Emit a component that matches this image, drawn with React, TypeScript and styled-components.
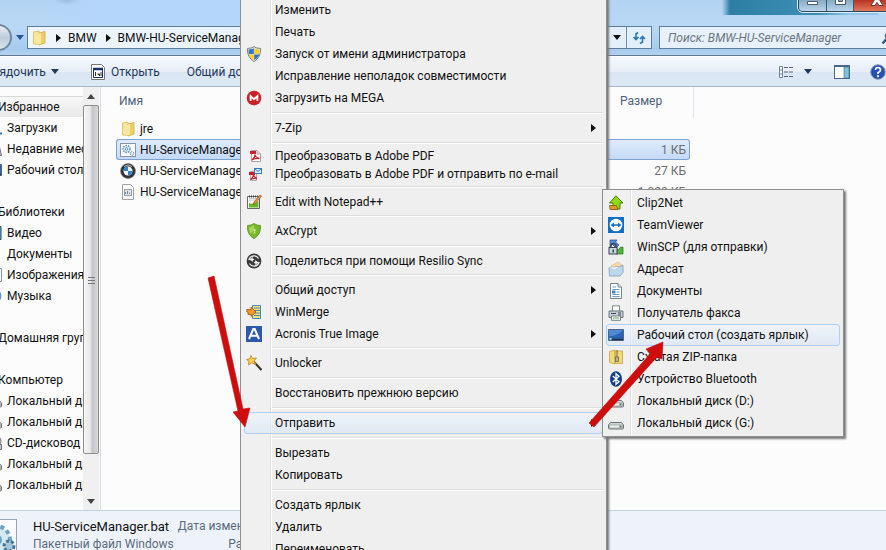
import React from "react";
import styled, { createGlobalStyle } from "styled-components";

const GlobalStyle = createGlobalStyle`
  * { box-sizing: border-box; }
  html, body { margin: 0; height: 100%; overflow: hidden; }
  #root { height: 100%; }
  body, button, input, table {
    font-family: Roboto, "Noto Sans", sans-serif;
    font-size: 12px;
    color: #111;
  }
  button { border: 0; background: none; padding: 0; text-align: left; white-space: nowrap; }
  a { color: inherit; text-decoration: none; }
  svg { display: block; flex: none; }
`;

/* ---------- window frame ---------- */

const Desktop = styled.div`
  position: relative;
  height: 100vh;
  overflow: hidden;
  background: #fcfcfc;
`;

const Window = styled.main`
  display: flex;
  flex-direction: column;
  height: 100%;
  margin: 0 -14px 0 -32px;
`;

const Glass = styled.header`
  display: flex;
  flex-direction: column;
  height: 56px;
  flex: none;
  border-bottom: 1px solid #60788f;
  background:
    linear-gradient(90deg, transparent 0, transparent 80px, #b4d6fb 130px, #b4d6fb 270px, transparent 310px) 0 0 / 100% 24px no-repeat,
    radial-gradient(ellipse 14px 5px at 100px 0, #88a9c9, transparent),
    linear-gradient(90deg, transparent 34px, #2d7fa3 42px, #3d8fb6 130px, #8fc4e6 160px) 720px -9px / 190px 24px no-repeat,
    linear-gradient(#b3d3f2, #b9d8f6 50%, #a6cbee 90%, #b5d2ee);
`;

const Caption = styled.div`
  display: flex;
  justify-content: flex-end;
  height: 26px;
  flex: none;
`;

const CaptionGroup = styled.div`
  display: flex;
  height: 12px;
  border: 1px solid #33485d;
  border-top: 0;
  border-radius: 0 0 5px 5px;
  box-shadow: 0 0 0 1px #d9ebfb;
  overflow: hidden;
`;

const CaptionButton = styled.button<{ $close?: boolean }>`
  display: flex;
  justify-content: center;
  width: ${(p) => (p.$close ? 46 : 27)}px;
  border-left: 1px solid #3d5972;
  background: ${(p) => (p.$close ? "linear-gradient(#b93420, #e2765a)" : "linear-gradient(#86a9c4, #b9d6ea)")};
  &:first-child { border-left: 0; }
`;

const AddressRow = styled.div`
  display: flex;
  align-items: center;
  height: 23px;
`;

const Back = styled.button`
  width: 27px;
  height: 27px;
  margin-left: 17px;
  flex: none;
  border: 2px solid #71889f;
  border-radius: 50%;
  background: linear-gradient(#e8eef4, #bccddd 50%, #d9e6f0);
`;

const HistoryButton = styled.button`
  display: flex;
  justify-content: center;
  width: 15px;
  flex: none;
`;

const AddressBar = styled.nav`
  display: flex;
  align-items: center;
  width: 625px;
  height: 23px;
  flex: none;
  border: 1px solid #5f7d9b;
  background: linear-gradient(90deg, #eef5fc, #e3effb);
  padding-left: 3px;
`;

const Crumb = styled.button`
  display: flex;
  align-items: center;
  gap: 7px;
  padding-left: 9px;
`;

const BarSpacer = styled.div`
  flex: 1;
`;

const RefreshButton = styled.button`
  display: flex;
  align-items: center;
  justify-content: center;
  width: 25px;
  height: 21px;
  margin-left: 5px;
  border-left: 1px solid #6f8ca8;
`;

const Search = styled.label`
  display: flex;
  align-items: center;
  flex: 1;
  height: 23px;
  margin: 0 2px 0 7px;
  padding: 0 2px 0 8px;
  border: 1px solid #5f7d9b;
  background: #e6f1fb;
`;

const SearchInput = styled.input`
  flex: 1;
  min-width: 0;
  padding: 0;
  border: 0;
  background: none;
  outline: none;
  font-style: italic;
  &::placeholder { color: #6c7682; opacity: 1; }
`;

/* ---------- command bar ---------- */

const CommandBar = styled.div`
  display: flex;
  align-items: center;
  height: 31px;
  flex: none;
  padding: 0 14px 0 4px;
  border-top: 1px solid #fff;
  border-bottom: 1px solid #a8b6c9;
  background: linear-gradient(#f6f9fd, #e6eef8 50%, #dae6f3 50%, #dde8f5);
`;

const Command = styled.button<{ $gap?: number }>`
  display: flex;
  align-items: center;
  gap: 5px;
  margin-left: ${(p) => p.$gap ?? 0}px;
  color: #1e395b;
`;

/* ---------- body ---------- */

const Body = styled.div`
  display: flex;
  flex: 1;
  min-height: 0;
`;

const Sidebar = styled.nav`
  width: 115px;
  flex: none;
  overflow: hidden;
  padding-top: 9px;
`;

const Group = styled.div`
  margin-bottom: 21px;
`;

const GroupHead = styled.a<{ $active?: boolean }>`
  display: flex;
  align-items: center;
  height: 21px;
  padding-left: 30px;
  white-space: nowrap;
  border-top: 1px solid ${(p) => (p.$active ? "#d9d9d9" : "transparent")};
  background: ${(p) => (p.$active ? "linear-gradient(#f8f8f8, #e8e8e8)" : "none")};
`;

const SideLink = styled.a`
  display: flex;
  align-items: center;
  gap: 5px;
  height: 21px;
  padding-left: 18px;
  white-space: nowrap;
`;

const ScrollTrack = styled.div`
  display: flex;
  flex-direction: column;
  width: 16px;
  flex: none;
  background: #f0f0f0;
`;

const ScrollArrow = styled.button`
  display: flex;
  align-items: center;
  justify-content: center;
  height: 18px;
  flex: none;
`;

const Thumb = styled.div`
  display: flex;
  align-items: center;
  justify-content: center;
  flex: 349;
  border: 1px solid #8e8e8e;
  border-radius: 2px;
  background: linear-gradient(90deg, #f6f6f6, #e6e6e8 45%, #c4c4c8 60%, #d9d9dc);
`;

const TrackRest = styled.div`
  flex: 38;
`;

const Files = styled.section`
  flex: 1;
  min-width: 0;
  margin-left: 1px;
  padding-left: 15px;
  border-left: 1px solid #cfdcec;
`;

const FileTable = styled.table`
  width: 578px;
  table-layout: fixed;
  border-collapse: separate;
  border-spacing: 0;
`;

const HeadCell = styled.th<{ $w?: number }>`
  width: ${(p) => (p.$w ? `${p.$w}px` : "auto")};
  height: 31px;
  padding: 0 3px 4px;
  text-align: left;
  font-weight: 400;
  color: #4c607a;
`;

const HeadEdge = styled.td`
  width: 4px;
  padding: 0;
  border-right: 1px solid #e4e8ee;
`;

const FileRow = styled.tr<{ $selected?: boolean }>`
  td {
    height: 21px;
    padding: 0 3px;
    border: 1px solid transparent;
    border-width: 1px 0;
    ${(p) => p.$selected && "border-color: #7da2ce; background: linear-gradient(#dfebfb, #c4dafa);"}
  }
  td:first-child { border-left-width: 1px; border-radius: 3px 0 0 3px; padding-left: 3px; }
  td:last-child { border-right-width: 1px; border-radius: 0 3px 3px 0; text-align: right; color: #6d6d6d; }
`;

const FileName = styled.span`
  display: flex;
  align-items: center;
  gap: 4px;
  height: 19px;
  white-space: nowrap;
`;

const Details = styled.footer`
  display: flex;
  height: 40px;
  flex: none;
  border-top: 1px solid #c3d0e0;
  background: #eef3fb;
  overflow: hidden;
`;

const DetailIcon = styled.div`
  width: 49px;
  height: 49px;
  margin: 8px 0 0;
  flex: none;
  border: 1px solid #98a5b3;
  background: #fbfcfe;
`;

const DetailText = styled.div<{ $right?: boolean }>`
  display: grid;
  grid-template-rows: 18px 18px;
  align-items: center;
  justify-items: ${(p) => (p.$right ? "end" : "start")};
  height: 36px;
  margin: 6px 0 0 ${(p) => (p.$right ? 4 : 16)}px;
  color: #5a6b80;
  white-space: nowrap;
`;

const DetailTitle = styled.strong`
  font-weight: 400;
  font-size: 13px;
  color: #111;
`;

/* ---------- menus ---------- */

const ContextMenu = styled.div`
  position: absolute;
  left: 240px;
  top: -1px;
  width: 367px;
  padding: 0 3px;
  border: 1px solid #8f8f8f;
  border-width: 0 1px;
  background: linear-gradient(90deg, #f0f0f0 29px, #dfdfdf 29px, #dfdfdf 30px, #fff 30px, #fff 31px, #efefef 31px);
  box-shadow: 2px 0 2px #777;
`;

const SubMenu = styled.div`
  position: absolute;
  left: 602px;
  top: 189px;
  width: 242px;
  padding: 2px 3px;
  border: 1px solid #8f8f8f;
  background: linear-gradient(90deg, #f0f0f0 27px, #dfdfdf 27px, #dfdfdf 28px, #fff 28px, #fff 29px, #efefef 29px);
  box-shadow: 2px 2px 2px #777;
`;

const Item = styled.button<{ $h?: number; $active?: boolean }>`
  display: flex;
  align-items: center;
  width: 100%;
  height: ${(p) => p.$h ?? 22}px;
  padding-right: 6px;
  border: 1px solid ${(p) => (p.$active ? "#aecff7" : "transparent")};
  border-radius: 3px;
  ${(p) => p.$active && "background: linear-gradient(rgba(240,245,252,.7), rgba(218,230,247,.7));"}
`;

const ItemIcon = styled.span`
  display: flex;
  align-items: center;
  width: 30px;
  padding-left: 1px;
  flex: none;
`;

const ItemLabel = styled.span`
  flex: 1;
`;

const Separator = styled.hr`
  height: 2px;
  margin: 3px 0 3px 28px;
  border: 0;
  border-top: 1px solid #dedede;
  border-bottom: 1px solid #fff;
`;

const Pointers = styled.svg`
  position: absolute;
  left: 0;
  top: 0;
  pointer-events: none;
`;

/* ---------- icons ---------- */

type IconName =
  | "uac" | "mega" | "pdf" | "pdfMail" | "notepad" | "ax" | "sync" | "merge" | "acronis" | "wand"
  | "clip" | "team" | "scp" | "mail" | "doc" | "fax" | "desktop" | "zip" | "bt" | "disk"
  | "folder" | "bat" | "bmw" | "ini" | "download" | "recent" | "video" | "image" | "music" | "cd" | "program";

const drawings: Record<IconName, React.ReactNode> = {
  uac: (
    <>
      <path d="M8 0.5 10 1.8 14.6 2.5Q15.2 11 8 15.6 0.8 11 1.4 2.5L6 1.8Z" fill="#e4e6e4" stroke="#7b8288" />
      <path d="M7.8 2.2V8H2.6L2.6 3.4 6.4 3Z" fill="#3474c4" />
      <path d="M8.2 2.2 9.6 3 13.4 3.4V8H8.2Z" fill="#f2cf2e" />
      <path d="M2.7 8.4H7.8V14Q3.5 11.5 2.7 8.4Z" fill="#f2cf2e" />
      <path d="M8.2 8.4H13.3Q12.5 11.5 8.2 14Z" fill="#3474c4" />
    </>
  ),
  mega: (
    <>
      <circle cx="8" cy="8" r="7.3" fill="#cf1f26" />
      <path d="M4.6 11V6L8 9.2 11.4 6V11" fill="none" stroke="#fff" strokeWidth="1.8" />
    </>
  ),
  pdf: (
    <>
      <path d="M5.5 2.5H11L14.5 6V13.5H5.5Z" fill="#fff" stroke="#b0a0a0" />
      <path d="M11 2.5V6H14.5" fill="#ddd" stroke="#b0a0a0" />
      <rect x="4" y="3" width="6" height="3" fill="#c8202a" />
      <path d="M6 12Q9 10 9 6.5 9.5 9.5 13.5 10.5 9 9.8 6 12Z" fill="none" stroke="#c8202a" strokeWidth="1.3" />
    </>
  ),
  pdfMail: (
    <>
      <path d="M4.500 5.500H10.500V14.500H4.500Z" fill="#fff" stroke="#a9a9a9" />
      <rect x="3" y="6" width="6" height="3" fill="#c8202a" />
      <path d="M4.500 13.500Q7 12 7.500 9 8 11.500 11 12.500 7 12 4.500 13.500Z" fill="none" stroke="#c8202a" strokeWidth="1.3" />
      <rect x="8.500" y="2.500" width="7" height="5" fill="#dcecfb" stroke="#3a77bd" />
      <path d="M9 3 12 5.500 15 3" fill="none" stroke="#3a77bd" />
    </>
  ),
  notepad: (
    <>
      <path d="M1.500 2.500H13.500V14.500H1.500Z" fill="#fafafa" stroke="#666" />
      <path d="M3 2.500H12" stroke="#444" strokeWidth="2" strokeDasharray="1 1" />
      <path d="M3 6H10M3 4.500H11" stroke="#ccc" />
      <path d="M3 9Q7 11 12.500 7V13.500H3Z" fill="#69b52c" />
      <path d="M7 10.500 8 8 14 1 15.500 2 9.500 9.500Z" fill="#e8923a" stroke="#8d4b1e" strokeWidth=".6" />
    </>
  ),
  ax: (
    <>
      <path d="M8 .5Q11 2.500 14.500 2.500 15.500 11 8 15.800 .5 11 1.500 2.500 5 2.500 8 .5Z" fill="#78b72a" stroke="#4f8b17" strokeWidth=".7" />
      <path d="M8 2Q5 4 3 4 2.800 8 4.500 11Q9 8 8 2Z" fill="#a6d456" />
      <circle cx="8.500" cy="7" r="1.300" fill="#c5e58c" />
      <path d="M8 8H9L9.500 10.500H7.500Z" fill="#c5e58c" />
    </>
  ),
  sync: (
    <>
      <circle cx="8" cy="8" r="7.400" fill="#3a3a3a" />
      <path d="M12.500 5.500A5.200 5.200 0 0 0 3 6.500H8M3.500 10.500A5.200 5.200 0 0 0 13 9.500H8" fill="none" stroke="#eee" strokeWidth="1.200" />
      <path d="M7 4.800 4.500 6.500 7 8.300M9 7.700 11.500 9.500 9 11.200" fill="none" stroke="#eee" strokeWidth="1.200" />
    </>
  ),
  merge: (
    <>
      <path d="M6.500 1.500H14.500V14.500H6.500Z" fill="#f7e27a" stroke="#4a89b8" />
      <path d="M8 4H14M8 6.500H14M8 9H14M8 11.500H14" stroke="#3d8fc4" />
      <path d="M.8 5.500H5V3L10 8 5 12.500V10.500H2V8H.8Z" fill="#ef9a2a" stroke="#a85510" strokeWidth=".8" />
    </>
  ),
  acronis: (
    <>
      <rect width="16" height="16" fill="#2c5aa8" />
      <path d="M3 13 7.300 3H8.700L13 13M4.800 9.700H11.200" fill="none" stroke="#fff" strokeWidth="2" />
    </>
  ),
  wand: (
    <>
      <path d="M7 6 15.500 15" stroke="#3c3226" strokeWidth="2" />
      <path d="M7 6 10 9" stroke="#98815f" strokeWidth="2" />
      <path d="M5 .5 6.500 3.500 10.500 3 8 6 9.500 9.500 5.800 7.800 2.500 10 3 6.500 .5 4.500 4 3.800Z" fill="#fbd24c" stroke="#c07820" strokeWidth=".8" />
    </>
  ),
  clip: (
    <>
      <path d="M8 .8 15 8H12V14H5V8H1.500Z" fill="#8ddb10" stroke="#477d0c" />
      <path d="M1.500 10.500H8.500L10 14.500H2Z" fill="#d99a28" stroke="#88540e" strokeWidth=".8" />
    </>
  ),
  team: (
    <>
      <rect width="16" height="16" fill="#1170c4" />
      <circle cx="8" cy="8" r="6.300" fill="#fff" />
      <path d="M2.500 8 6 5.500V7.200H10V5.500L13.500 8 10 10.500V8.800H6V10.500Z" fill="#1170c4" />
    </>
  ),
  scp: (
    <>
      <path d="M2 1H9L7.500 3 11 6 8 9 4.500 5.500 2 8Z" fill="#4b8de0" stroke="#23508f" strokeWidth=".7" />
      <path d="M15 15H8V9L10.500 11 12 8.500 15 8Z" fill="#4cb53a" stroke="#23701d" strokeWidth=".7" />
      <path d="M3 9V7A2.500 2.500 0 0 1 8 7V9" fill="none" stroke="#3b4651" strokeWidth="1.400" />
      <rect x="1" y="8.500" width="8" height="6.500" fill="#c9d4dc" stroke="#38444f" />
      <rect x="4.500" y="10.500" width="1.500" height="3" fill="#38444f" />
    </>
  ),
  mail: (
    <>
      <path d="M3 5 10 1 14 4V8H3Z" fill="#f9d9a3" stroke="#d8b98a" strokeWidth=".6" />
      <path d="M1 6.500 12 5.500 15 4V11.500L12 15H1.500Z" fill="#bdd7ee" stroke="#7f9ebb" strokeWidth=".8" />
      <path d="M1 6.500 6 9 12 5.700" fill="#e9f3fb" stroke="#b4cadd" strokeWidth=".7" />
    </>
  ),
  doc: (
    <>
      <path d="M2.500 .5H10L13.500 4V15.500H2.500Z" fill="#fdfdfd" stroke="#76858f" />
      <path d="M10 .5V4H13.500" fill="#dfe7ed" stroke="#76858f" />
      <path d="M4.500 4H8M4.500 6.500H11.500M8.500 9H11.500M4.500 11.500H11.500M4.500 13.500H11.500" stroke="#6f9fc8" />
      <rect x="4" y="7.500" width="3.500" height="3" fill="#4b88c0" />
    </>
  ),
  fax: (
    <>
      <path d="M4.500 6V.8H11.500V6" fill="#fff" stroke="#7d8890" />
      <path d="M1 6H15V12.500H1Z" fill="#c7ced4" stroke="#69747d" />
      <path d="M3 8.500H8M10 8H13M10 10H13" stroke="#3d4a55" />
      <path d="M3.500 11H12.500V15.300H3.500Z" fill="#fafafa" stroke="#76818a" />
      <path d="M5 13H11" stroke="#62b04c" />
    </>
  ),
  desktop: (
    <>
      <path d="M.5 2.500H15.500V13.500H.5Z" fill="#2a62b5" stroke="#4f6784" />
      <path d="M1 3H15Q10 9 1 9Z" fill="#4d8ad6" />
      <path d="M1 12.500H15" stroke="#20324b" strokeWidth="1.500" />
      <circle cx="2.500" cy="12" r="1.300" fill="#8dd0f0" />
    </>
  ),
  zip: (
    <>
      <path d="M1.500 2.500 7 1V15L1.500 13.500ZM7 2H14.500V14.500H7Z" fill="#f3da78" stroke="#c6a33e" strokeWidth=".8" />
      <path d="M9 1.500V8" stroke="#6e6655" strokeWidth="2" strokeDasharray="1 1" />
      <rect x="7.500" y="8" width="3" height="4.500" fill="#b9b4a4" stroke="#6e6655" strokeWidth=".8" />
    </>
  ),
  bt: (
    <>
      <ellipse cx="8" cy="8" rx="6" ry="7.800" fill="#0f3f8c" />
      <path d="M4.800 5 11 10.700 8 13.300V2.700L11 5.300 4.800 11" fill="none" stroke="#fff" strokeWidth="1.300" />
    </>
  ),
  disk: (
    <>
      <path d="M2.500 7.500H13.500L15.500 10V13Q15.500 14 14.500 14H1.500Q.5 14 .5 13V10Z" fill="#d4d6d5" stroke="#70757a" />
      <rect x="1.500" y="10" width="13" height="3" rx="1" fill="#eceeed" stroke="#8a8f92" strokeWidth=".6" />
      <rect x="11.500" y="10.500" width="2" height="2" fill="#4d7c54" />
    </>
  ),
  folder: (
    <>
      <path d="M2.500 2 8 1V14.500L2.500 14Z" fill="#f7e79b" stroke="#d8bb55" strokeWidth=".8" />
      <path d="M8 3 14 1.500V13L8 15Z" fill="#ecd06b" stroke="#cfac42" strokeWidth=".8" />
      <path d="M6 4 10 3V14L6 14.500Z" fill="#f8e89d" />
    </>
  ),
  bat: (
    <>
      <rect x=".5" y="1.500" width="15" height="13" fill="#fdfdfd" stroke="#8496a8" />
      <circle cx="6.500" cy="7" r="3.500" fill="#e4f0f7" stroke="#5d94b4" strokeWidth="1.500" strokeDasharray="1.500 1" />
      <circle cx="6.500" cy="7" r="1.300" fill="#fff" stroke="#5d94b4" />
      <circle cx="12" cy="11.500" r="1.800" fill="#e4f0f7" stroke="#47789b" strokeDasharray="1 .7" />
    </>
  ),
  bmw: (
    <>
      <circle cx="8" cy="8" r="7.500" fill="#303236" stroke="#888" strokeWidth=".8" />
      <circle cx="8" cy="8" r="4.500" fill="#f4f4f4" />
      <path d="M8 8V3.500A4.500 4.500 0 0 0 3.500 8ZM8 8V12.500A4.500 4.500 0 0 0 12.500 8Z" fill="#2f86cf" />
      <path d="M4 3.500Q8 .5 12 3.500" fill="none" stroke="#bbb" />
    </>
  ),
  ini: (
    <>
      <path d="M2.500 .5H10.500L13.500 3.500V15.500H2.500Z" fill="#fbfbfb" stroke="#a2a2a2" />
      <rect x="4.500" y="5.500" width="7" height="6" fill="#e3e7ea" stroke="#98a2aa" />
      <path d="M5.500 10V8M7.500 10V7M9.500 10V8.500" stroke="#6e879a" />
    </>
  ),
  download: <path d="M2 13.500H16M8 1V10M4 7 8 11 12 7" fill="none" stroke="#3579b5" strokeWidth="2" />,
  recent: <path d="M2.500 1.500H12.500L15.500 14.500H2.500Z" fill="#bda9b5" stroke="#84768c" />,
  video: <path d="M1.500 1.500H15V14.500H1.500Z" fill="#4fa0ab" stroke="#285866" />,
  image: <path d="M1.500 1.500H15.500V14.500H1.500Z" fill="#f6fafc" stroke="#8997a5" />,
  music: <circle cx="8" cy="8" r="7" fill="#8db9e5" stroke="#628cb8" />,
  cd: (
    <>
      <circle cx="10" cy="6" r="5" fill="#ddd" stroke="#777" />
      <rect x="1" y="9.500" width="14.500" height="5" fill="#c6c6c6" stroke="#777" />
    </>
  ),
  program: (
    <>
      <path d="M1.500 .5H11.500L14.500 3.500V15.500H1.500Z" fill="#fff" stroke="#777" />
      <path d="M3.500 4.500H12.500V13.500H3.500Z" fill="#fff" stroke="#1b2f6b" />
      <path d="M3 5H13" stroke="#1b2f6b" strokeWidth="2.500" />
      <path d="M5.500 8V12M7.500 10H9.500V12M11 8V12" stroke="#333" />
    </>
  ),
};

const Icon = ({ name }: { name: IconName }) => (
  <svg width="16" height="16" viewBox="0 0 16 16" aria-hidden="true">{drawings[name]}</svg>
);

const Triangle = ({ dir, color = "#111" }: { dir: "right" | "down" | "up"; color?: string }) => (
  <svg width={dir === "right" ? 5 : 8} height={dir === "right" ? 8 : 5} viewBox={dir === "right" ? "0 0 5 8" : "0 0 8 5"} aria-hidden="true">
    <path d={dir === "right" ? "M0 0 5 4 0 8Z" : dir === "down" ? "M0 0H8L4 5Z" : "M0 5H8L4 0Z"} fill={color} />
  </svg>
);

/* ---------- data ---------- */

type Entry = { label: string; icon?: IconName; h?: number; arrow?: boolean; active?: boolean };

const menuGroups: Entry[][] = [
  [
    { label: "Изменить" },
    { label: "Печать" },
    { label: "Запуск от имени администратора", icon: "uac" },
    { label: "Исправление неполадок совместимости" },
    { label: "Загрузить на MEGA", icon: "mega" },
  ],
  [{ label: "7-Zip", arrow: true }],
  [
    { label: "Преобразовать в Adobe PDF", icon: "pdf", h: 18 },
    { label: "Преобразовать в Adobe PDF и отправить по e-mail", icon: "pdfMail", h: 18 },
  ],
  [{ label: "Edit with Notepad++", icon: "notepad", h: 21 }],
  [{ label: "AxCrypt", icon: "ax", arrow: true }],
  [{ label: "Поделиться при помощи Resilio Sync", icon: "sync", h: 21 }],
  [
    { label: "Общий доступ", arrow: true },
    { label: "WinMerge", icon: "merge" },
    { label: "Acronis True Image", icon: "acronis", arrow: true, h: 21 },
  ],
  [{ label: "Unlocker", icon: "wand" }],
  [{ label: "Восстановить прежнюю версию" }],
  [{ label: "Отправить", arrow: true, active: true }],
  [{ label: "Вырезать" }, { label: "Копировать" }],
  [{ label: "Создать ярлык" }, { label: "Удалить" }, { label: "Переименовать" }],
];

const sendTo: Entry[] = [
  { label: "Clip2Net", icon: "clip" },
  { label: "TeamViewer", icon: "team" },
  { label: "WinSCP (для отправки)", icon: "scp" },
  { label: "Адресат", icon: "mail" },
  { label: "Документы", icon: "doc" },
  { label: "Получатель факса", icon: "fax" },
  { label: "Рабочий стол (создать ярлык)", icon: "desktop", active: true },
  { label: "Сжатая ZIP-папка", icon: "zip" },
  { label: "Устройство Bluetooth", icon: "bt" },
  { label: "Локальный диск (D:)", icon: "disk" },
  { label: "Локальный диск (G:)", icon: "disk" },
];

const places: { head: string; links: [string, IconName][] }[] = [
  { head: "Избранное", links: [["Загрузки", "download"], ["Недавние места", "recent"], ["Рабочий стол", "desktop"]] },
  { head: "Библиотеки", links: [["Видео", "video"], ["Документы", "doc"], ["Изображения", "image"], ["Музыка", "music"]] },
  { head: "Домашняя группа", links: [] },
  {
    head: "Компьютер",
    links: [["Локальный диск", "disk"], ["Локальный диск", "disk"], ["CD-дисковод", "cd"], ["Локальный диск", "disk"], ["Локальный диск", "disk"]],
  },
];

const files: { name: string; icon: IconName; size: string; selected?: boolean }[] = [
  { name: "jre", icon: "folder", size: "" },
  { name: "HU-ServiceManager.bat", icon: "bat", size: "1 КБ", selected: true },
  { name: "HU-ServiceManager.exe", icon: "bmw", size: "27 КБ" },
  { name: "HU-ServiceManager.jar", icon: "ini", size: "1 020 КБ" },
];

const MenuItem = ({ entry }: { entry: Entry }) => (
  <Item role="menuitem" $h={entry.h} $active={entry.active}>
    <ItemIcon>{entry.icon && <Icon name={entry.icon} />}</ItemIcon>
    <ItemLabel>{entry.label}</ItemLabel>
    {entry.arrow && <Triangle dir="right" />}
  </Item>
);

export default function App() {
  return (
    <Desktop>
      <GlobalStyle />
      <Window>
        <Glass>
          <Caption>
            <CaptionGroup>
              <CaptionButton aria-label="Свернуть">
                <svg width="13" height="6" viewBox="0 0 13 6"><path d="M1.500 1.500H11.500V4.500H1.500Z" fill="#fff" stroke="#4b5a68" /></svg>
              </CaptionButton>
              <CaptionButton aria-label="Развернуть">
                <svg width="13" height="6" viewBox="0 0 13 6"><path d="M1.500 -4V4.500H11.500V-4H8.500V1.500H4.500V-4Z" fill="#fff" stroke="#4b5a68" /></svg>
              </CaptionButton>
              <CaptionButton $close aria-label="Закрыть">
                <svg width="14" height="7" viewBox="0 0 14 7"><path d="M1 5.500 5 -1H9L13 5.500H9L7 2.500 5 5.500Z" fill="#fff" stroke="#5b3a38" /></svg>
              </CaptionButton>
            </CaptionGroup>
          </Caption>
          <AddressRow>
            <Back aria-label="Назад" />
            <HistoryButton aria-label="Последние страницы"><Triangle dir="down" color="#24598f" /></HistoryButton>
            <AddressBar aria-label="Адрес">
              <Icon name="folder" />
              <Crumb><Triangle dir="right" />BMW</Crumb>
              <Crumb><Triangle dir="right" />BMW-HU-ServiceManager</Crumb>
              <BarSpacer />
              <Triangle dir="down" />
              <RefreshButton aria-label="Обновить">
                <svg width="14" height="14" viewBox="0 0 14 14">
                  <path d="M6 1.500 4 3V8M1.500 6 4 8.500 6.500 6" fill="none" stroke="#2a75b8" strokeWidth="1.600" />
                  <path d="M8 12.500 10.500 11V6M8 8 10.500 5.500 13 8" fill="none" stroke="#2a75b8" strokeWidth="1.600" />
                </svg>
              </RefreshButton>
            </AddressBar>
            <Search>
              <SearchInput aria-label="Поиск" placeholder="Поиск: BMW-HU-ServiceManager" />
              <svg width="14" height="14" viewBox="0 0 14 14">
                <circle cx="8.500" cy="5" r="4" fill="none" stroke="#3a6b9c" strokeWidth="1.500" />
                <path d="M5.500 8 1.500 12.500" stroke="#2c5f92" strokeWidth="2.500" />
              </svg>
            </Search>
          </AddressRow>
        </Glass>

        <CommandBar>
          <Command>Упорядочить<Triangle dir="down" color="#1e395b" /></Command>
          <Command $gap={31}><Icon name="program" />Открыть</Command>
          <Command $gap={27}>Общий доступ</Command>
          <BarSpacer />
          <Command aria-label="Изменить представление">
            <svg width="16" height="14" viewBox="0 0 16 14">
              <path d="M1.500 1.500H4.500V12.500H1.500ZM1.500 5H4.500M1.500 9H4.500" fill="#fff" stroke="#718399" />
              <path d="M6 2.500H10M11 2.500H15M6 7H10M11 7H15M6 11.500H10M11 11.500H15" stroke="#52677f" />
            </svg>
          </Command>
          <Command $gap={10} aria-label="Другие представления"><Triangle dir="down" color="#1e395b" /></Command>
          <Command $gap={22} aria-label="Область просмотра">
            <svg width="16" height="14" viewBox="0 0 16 14">
              <rect x=".5" y=".5" width="15" height="13" fill="#fff" stroke="#47698b" />
              <path d="M1 1.500H15" stroke="#47698b" />
              <rect x="10" y="2" width="5" height="11" fill="#7cc4dd" stroke="#47698b" strokeWidth=".6" />
            </svg>
          </Command>
          <Command $gap={20} aria-label="Справка">
            <svg width="16" height="16" viewBox="0 0 16 16">
              <circle cx="8" cy="8" r="7.300" fill="#2450b8" stroke="#8a99b8" />
              <path d="M5.500 6Q5.500 3.500 8 3.500T10.500 6Q10.500 7.300 8 8.700V10" fill="none" stroke="#fff" strokeWidth="1.700" />
              <circle cx="8" cy="12.200" r="1.100" fill="#fff" />
            </svg>
          </Command>
        </CommandBar>

        <Body>
          <Sidebar aria-label="Папки">
            {places.map((group, i) => (
              <Group key={group.head}>
                <GroupHead href="#" $active={i === 0}>{group.head}</GroupHead>
                {group.links.map(([label, icon], n) => (
                  <SideLink href="#" key={n}><Icon name={icon} />{label}</SideLink>
                ))}
              </Group>
            ))}
          </Sidebar>
          <ScrollTrack>
            <ScrollArrow aria-label="Вверх"><Triangle dir="up" color="#444" /></ScrollArrow>
            <Thumb>
              <svg width="7" height="8" viewBox="0 0 7 8"><path d="M0 1.500H7M0 4.500H7M0 7.500H7" stroke="#777" /></svg>
            </Thumb>
            <TrackRest />
            <ScrollArrow aria-label="Вниз"><Triangle dir="down" color="#444" /></ScrollArrow>
          </ScrollTrack>
          <Files>
            <FileTable>
              <thead>
                <tr><HeadCell>Имя</HeadCell><HeadCell $w={73}>Размер</HeadCell><HeadEdge /></tr>
              </thead>
              <tbody>
                {files.map((f) => (
                  <FileRow key={f.name} $selected={f.selected}>
                    <td><FileName><Icon name={f.icon} />{f.name}</FileName></td>
                    <td>{f.size}</td>
                  </FileRow>
                ))}
              </tbody>
            </FileTable>
          </Files>
        </Body>

        <Details>
          <DetailIcon>
            <svg width="47" height="47" viewBox="0 0 47 47">
              <circle cx="27" cy="20" r="14" fill="#d5e8f2" stroke="#6ba3c1" strokeWidth="4" strokeDasharray="4 3" />
              <circle cx="27" cy="20" r="5" fill="#fff" stroke="#6ba3c1" strokeWidth="2" />
              <circle cx="40" cy="26" r="5" fill="#a9c6d9" stroke="#47789b" strokeWidth="3" strokeDasharray="3 2" />
            </svg>
          </DetailIcon>
          <DetailText>
            <DetailTitle>HU-ServiceManager.bat</DetailTitle>
            <span>Пакетный файл Windows</span>
          </DetailText>
          <DetailText $right>
            <span>Дата изменения:</span>
            <span>Размер:</span>
          </DetailText>
        </Details>
      </Window>

      <ContextMenu role="menu">
        {menuGroups.map((group, i) => (
          <React.Fragment key={i}>
            {i > 0 && <Separator />}
            {group.map((entry) => <MenuItem key={entry.label} entry={entry} />)}
          </React.Fragment>
        ))}
      </ContextMenu>

      <SubMenu role="menu">
        {sendTo.map((entry) => <MenuItem key={entry.label} entry={entry} />)}
      </SubMenu>

      <Pointers width="886" height="550" viewBox="0 0 886 550" aria-hidden="true">
        <path d="M208 278 214 276 243 409 250 408 245 427 233 412 238 411Z" fill="#cf0d0d" stroke="#b51010" strokeWidth=".6" />
        <path d="M589 423 650 354 646 349 663 342 662 359 657 357 594 427Z" fill="#cf0d0d" stroke="#b51010" strokeWidth=".6" />
      </Pointers>
    </Desktop>
  );
}
